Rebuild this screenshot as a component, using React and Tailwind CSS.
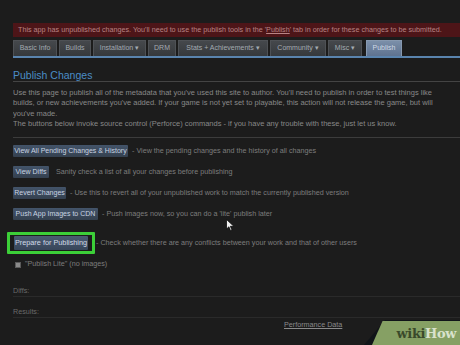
import React from 'react';

const tabs = [
  { label: 'Basic Info', w: 'w-[44px]' },
  { label: 'Builds', w: 'w-[32px]' },
  { label: 'Installation ▾', w: 'w-[53px]' },
  { label: 'DRM', w: 'w-[28px]' },
  { label: 'Stats + Achievements ▾', w: 'w-[90px]' },
  { label: 'Community ▾', w: 'w-[56px]' },
  { label: 'Misc ▾', w: 'w-[34px]' },
];

const actions = [
  { label: 'View All Pending Changes & History', w: 'w-[115px]', desc: '- View the pending changes and the history of all changes' },
  { label: 'View Diffs', w: 'w-[36px]', desc: 'Sanity check a list of all your changes before publishing' },
  { label: 'Revert Changes', w: 'w-[53px]', desc: '- Use this to revert all of your unpublished work to match the currently published version' },
  { label: 'Push App Images to CDN', w: 'w-[85px]', desc: '- Push images now, so you can do a \'lite\' publish later' },
];

function ActionButton({ label, w }) {
  return (
    <span
      className={`${w} h-[12px] shrink-0 flex items-center justify-center rounded-[1px] bg-gradient-to-b from-[#43546a] to-[#34404f] text-[7px] text-[#c9d4e2] whitespace-nowrap`}
    >
      {label}
    </span>
  );
}

export default function App() {
  return (
    <div className="relative w-[460px] h-[345px] overflow-hidden bg-[#1c1c1c] font-['Liberation_Sans',Arial,sans-serif]">
      <div className="pt-[23px] pl-[13px]">
        {/* warning banner */}
        <div className="h-[14px] bg-[#4d1518] flex items-center pl-[5px] text-[7.2px] text-[#b88484] whitespace-nowrap overflow-hidden">
          This app has unpublished changes. You'll need to use the publish tools in the '<span className="underline">Publish</span>' tab in order for these changes to be submitted.
        </div>

        {/* tabs */}
        <div className="mt-[3px] flex gap-[2px] h-[16px]">
          {tabs.map((t) => (
            <div
              key={t.label}
              className={`${t.w} shrink-0 flex items-center justify-center bg-gradient-to-b from-[#45484c] to-[#36393c] border border-[#4e5155] border-b-0 text-[7px] text-[#a4abb2] whitespace-nowrap`}
            >
              {t.label}
            </div>
          ))}
          <div className="w-[36px] ml-[2px] shrink-0 flex items-center justify-center bg-gradient-to-b from-[#7b8fa9] to-[#5f7390] border border-[#8799b0] border-b-0 text-[7px] text-[#cfd9e6]">
            Publish
          </div>
        </div>
        <div className="h-[2px] bg-[#5a84ae]" />

        {/* heading */}
        <div className="mt-[11px] h-[13px] border-b border-[#444] text-[10.5px] leading-[12px] text-[#4b8dc6]">
          Publish Changes
        </div>

        <div className="mt-[6px] text-[7.5px] leading-[10.3px] text-[#888] whitespace-nowrap overflow-hidden">
          <div>Use this page to publish all of the metadata that you've used this site to author. You'll need to publish in order to test things like</div>
          <div>builds, or new achievements you've added. If your game is not yet set to playable, this action will not release the game, but will</div>
          <div>you've made.</div>
          <div>The buttons below invoke source control (Perforce) commands - if you have any trouble with these, just let us know.</div>
        </div>
        <div className="mt-[8px] h-px bg-[#3c3c3c]" />

        {/* action buttons */}
        <div className="mt-[7px] flex flex-col gap-[9px]">
          {actions.map((a) => (
            <div key={a.label} className="flex items-center gap-[4px] text-[7.2px] text-[#7c7c7c] whitespace-nowrap">
              <ActionButton label={a.label} w={a.w} />
              <span className={a.label === 'View Diffs' ? 'ml-[3px]' : ''}>{a.desc}</span>
            </div>
          ))}
        </div>

        {/* prepare for publishing (highlighted) */}
        <div className="mt-[12px] -ml-[6px] flex items-center gap-[1px] text-[7.2px] text-[#7c7c7c] whitespace-nowrap">
          <div className="border-[3px] border-[#3ccf38] px-[4px] py-[1px] rounded-[1px]">
            <span className="w-[74px] h-[14px] flex items-center justify-center rounded-[1px] bg-gradient-to-b from-[#4a5b72] to-[#38465a] text-[7.3px] text-[#d2dbe6]">
              Prepare for Publishing
            </span>
          </div>
          <span>- Check whether there are any conflicts between your work and that of other users</span>
        </div>

        <div className="mt-[5px] ml-[2px] flex items-center gap-[4px] text-[7.2px] text-[#7c7c7c]">
          <span className="w-[6px] h-[6px] bg-[#8a8a8a] border border-[#5a5a5a]" />
          <span>"Publish Lite" (no images)</span>
        </div>

        <div className="mt-[16px] h-[11px] border-b border-[#2a2a2a] text-[7.2px] leading-[10px] text-[#6a6a6a]">Diffs:</div>
        <div className="mt-[10px] h-[11px] border-b border-[#2a2a2a] text-[7.2px] leading-[10px] text-[#6a6a6a]">Results:</div>
        <div className="mt-[2px] pl-[271px] text-[7.2px] text-[#8a8a8a] underline">Performance Data</div>
      </div>

      {/* mouse cursor */}
      <svg className="absolute left-[226px] top-[219px]" width="9" height="13" viewBox="0 0 9 13">
        <path d="M0.5 0.5 L0.5 10 L2.9 7.8 L4.6 11.8 L6 11.1 L4.3 7.3 L7.8 7.3 Z" fill="#f0f0f0" stroke="#000" strokeWidth="0.7" />
      </svg>

      {/* wikiHow watermark */}
      <div className="absolute left-[364px] top-[320px] w-[96px] h-[25px] bg-[#101418] [clip-path:polygon(22%_0,100%_0,100%_100%,0_100%)]" />
      <div className="absolute left-[372px] top-[321px] w-[88px] h-[24px] bg-[#86a064] [clip-path:polygon(12%_0,100%_0,100%_100%,0_100%)] flex items-center justify-end pr-[4px]">
        <span className="font-['DejaVu_Serif',serif] font-bold text-[13px] leading-none tracking-[-0.4px]">
          <span className="text-[#3a4a2a]">wiki</span>
          <span className="text-[#d9e2cc]">How</span>
        </span>
      </div>
    </div>
  );
}
